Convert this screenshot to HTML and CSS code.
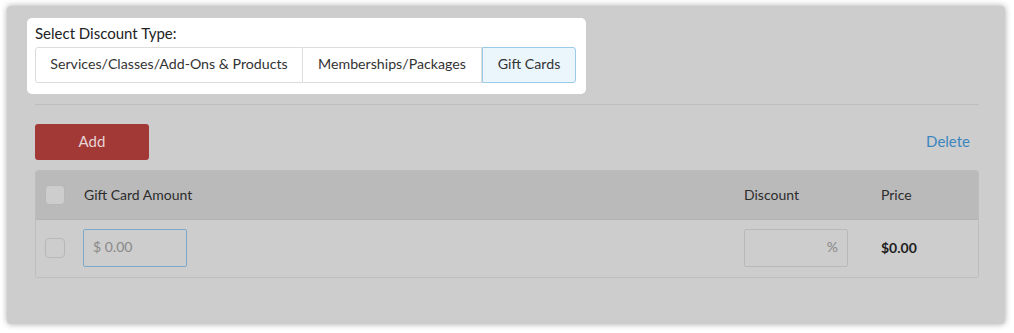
FILE: index.html
```html
<!DOCTYPE html>
<html>
<head>
<meta charset="utf-8">
<link rel="stylesheet" href="styles.css">
</head>
<body>
<div class="frame">
  <div class="panel">
    <div class="spot">
      <div class="spot-label">Select Discount Type:</div>
      <div class="seg">
        <div class="seg-item seg-1">Services/Classes/Add-Ons &amp; Products</div>
        <div class="seg-item seg-2">Memberships/Packages</div>
        <div class="seg-item seg-3 active">Gift Cards</div>
      </div>
    </div>
    <div class="divider"></div>
    <div class="toolbar">
      <button class="btn-add">Add</button>
      <a class="link-delete">Delete</a>
    </div>
    <div class="table">
      <div class="row head">
        <div class="cell cell-check"><span class="check"></span></div>
        <div class="cell">Gift Card Amount</div>
        <div class="cell">Discount</div>
        <div class="cell">Price</div>
      </div>
      <div class="row body">
        <div class="cell cell-check"><span class="check"></span></div>
        <div class="cell"><div class="input amount">$ 0.00</div></div>
        <div class="cell"><div class="input pct">%</div></div>
        <div class="cell price">$0.00</div>
      </div>
    </div>
  </div>
</div>
</body>
</html>
```

FILE: styles.css
```css
* { box-sizing: border-box; }
html, body { margin: 0; padding: 0; background: #ffffff; }
body {
  font-family: "Lato", "Open Sans", "Liberation Sans", sans-serif;
  font-size: 14px;
  color: #2c2c2c;
}
.frame {
  width: 1014px;
  height: 333px;
  padding: 6px 9px 9px 7px;
}
.panel {
  width: 998px;
  height: 318px;
  background: #cdcdcd;
  border-radius: 4px;
  box-shadow: 0 0 6px rgba(0, 0, 0, 0.35);
  padding: 12px 26px 0 28px;
}
.spot {
  margin-left: -8px;
  width: 559px;
  background: #ffffff;
  border-radius: 5px;
  padding: 6px 10px 11px 8px;
}
.spot-label {
  font-size: 15px;
  line-height: 18px;
  color: #222;
  margin-bottom: 5px;
}
.seg {
  display: flex;
  height: 36px;
}
.seg-item {
  display: flex;
  align-items: center;
  justify-content: center;
  border: 1px solid #dcdcdc;
  color: #333;
  font-size: 14.2px;
  background: #fff;
  padding-bottom: 3px;
}
.seg-1 { width: 268px; border-radius: 3px 0 0 3px; }
.seg-2 { width: 179px; border-left: none; }
.seg-3 { width: 94px; border-left: none; border-radius: 0 3px 3px 0; }
.seg-item.active {
  background: #eaf5fc;
  border: 1px solid #9ccbea;
}
.divider {
  margin-top: 10px;
  height: 1px;
  background: #bebebe;
}
.toolbar {
  margin-top: 19px;
  display: flex;
  justify-content: space-between;
  align-items: center;
  height: 36px;
}
.btn-add {
  width: 114px;
  height: 36px;
  background: #a33937;
  border: none;
  border-radius: 3px;
  color: #e6d4d4;
  font-family: inherit;
  font-size: 15px;
  padding: 0 0 3px 0;
}
.link-delete {
  color: #3b86c0;
  font-size: 15px;
  padding-right: 9px;
  margin-top: -3px;
}
.table {
  margin-top: 10px;
  border: 1px solid #bdbdbd;
  border-radius: 3px;
  overflow: hidden;
}
.row {
  display: grid;
  grid-template-columns: 48px 660px 137px 1fr;
  align-items: center;
}
.row.head {
  height: 49px;
  background: #bababa;
  border-bottom: 1px solid #b4b4b4;
}
.row.head .cell { padding-bottom: 2px; }
.row.head .cell-check { padding-bottom: 0; }
.row.body {
  height: 57px;
  background: #cdcdcd;
}
.cell { font-size: 14px; color: #2c2c2c; }
.cell-check { padding-left: 9px; display: flex; }
.check {
  width: 20px;
  height: 20px;
  border: 1px solid #b7b7b7;
  border-radius: 4px;
  background: #cdcdcd;
}
.row.body .check { margin-top: -1px; }
.input {
  width: 104px;
  height: 38px;
  border: 1px solid #b9b9b9;
  border-radius: 2px;
  display: flex;
  align-items: center;
  color: #888;
  font-size: 14px;
  padding-bottom: 2px;
  margin-top: -2px;
}
.input.amount {
  border: 1.5px solid #7ea8c8;
  padding-left: 9px;
  margin-left: -1px;
}
.input.pct {
  justify-content: flex-end;
  padding-right: 9px;
}
.price { font-weight: bold; color: #1e1e1e; padding-bottom: 3px; }
```
